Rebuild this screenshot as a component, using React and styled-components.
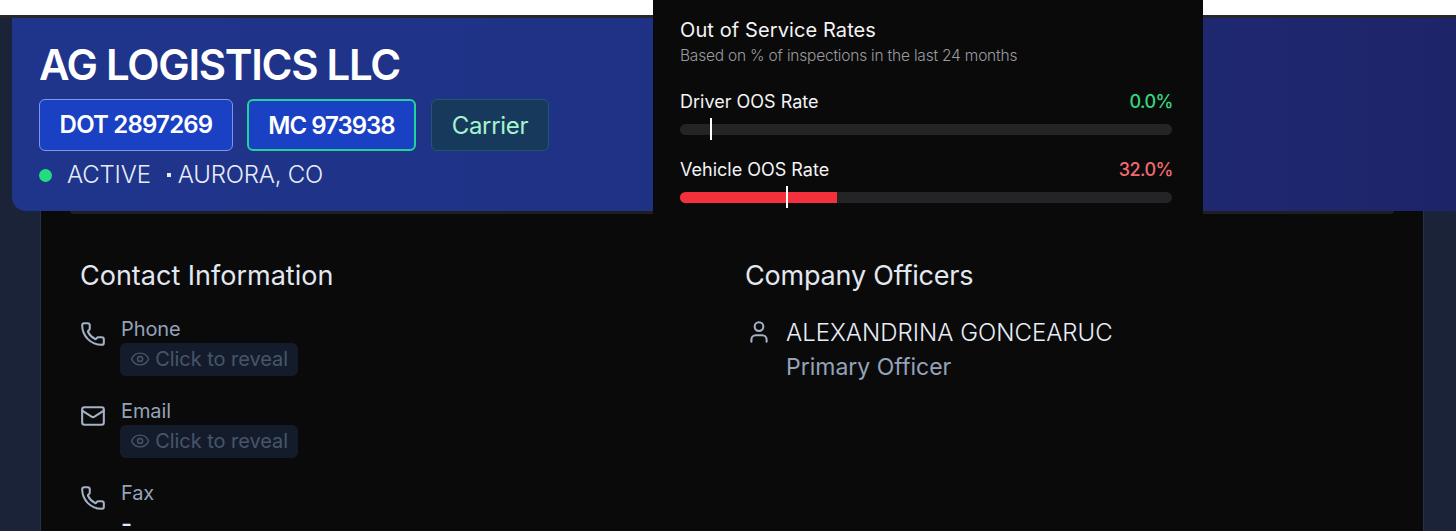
import React from "react";
import styled, { createGlobalStyle } from "styled-components";
import { Eye, Mail, Phone, User } from "lucide-react";

const GlobalStyle = createGlobalStyle`
  html, body {
    margin: 0;
    padding: 0;
    height: 531px;
    overflow: hidden;
    background: #1a2338;
    font-family: Inter, "Noto Sans", "Liberation Sans", sans-serif;
  }
`;

const Page = styled.div`
  position: relative;
  height: 531px;
  overflow: hidden;
`;

const TopStrip = styled.div`
  height: 15px;
  background: #ffffff;
  border-bottom: 3px solid #26272c;
`;

const Hero = styled.header`
  box-sizing: border-box;
  height: 193px;
  margin-left: 12px;
  padding: 27px 28px 0;
  border-radius: 0 0 0 14px;
  background: linear-gradient(90deg, #1f358c 0%, #1f3184 50%, #1e2468 100%);
`;

const Title = styled.h1`
  margin: 0 0 0 -1px;
  font-size: 42px;
  line-height: 40px;
  font-weight: 600;
  letter-spacing: -1.3px;
  color: #ffffff;
`;

const BadgeRow = styled.div`
  display: flex;
  margin-top: 14px;
  margin-left: -1px;
`;

const Badge = styled.span`
  box-sizing: border-box;
  display: flex;
  align-items: center;
  justify-content: center;
  width: ${(p) => p.$width}px;
  height: 52px;
  margin-right: ${(p) => p.$gap}px;
  padding-bottom: ${(p) => p.$lift || 0}px;
  border-radius: 6px;
  border: ${(p) => p.$border};
  background: ${(p) => p.$bg};
  color: ${(p) => p.$color};
  font-size: 24px;
  font-weight: ${(p) => p.$weight};
  letter-spacing: ${(p) => p.$spacing}px;
`;

const StatusRow = styled.div`
  display: flex;
  align-items: center;
  margin: 9px 0 0 -1px;
  font-size: 24px;
  line-height: 30px;
  font-weight: 300;
  letter-spacing: -0.2px;
  color: #e7edf8;
`;

const StatusDot = styled.span`
  width: 13px;
  height: 13px;
  border-radius: 50%;
  background: #22dd80;
  margin-right: 15px;
`;

const Separator = styled.span`
  width: 4px;
  height: 4px;
  margin: 0 7px 0 16px;
  background: #e7edf8;
`;

const MainCard = styled.main`
  box-sizing: border-box;
  height: 320px;
  margin: 0 32px 0 40px;
  background: #0a0a0b;
  border: solid #25324d;
  border-width: 0 1px;
`;

const HeroEdge = styled.div`
  height: 3px;
  margin: 0 29px;
  background: #1f1f23;
  border-radius: 0 0 10px 10px;
`;

const Columns = styled.div`
  display: grid;
  grid-template-columns: 665px 1fr;
  padding: 45px 0 0 39px;
`;

const Heading = styled.h2`
  margin: 0 0 24px;
  font-size: 27px;
  line-height: 34px;
  font-weight: 400;
  letter-spacing: ${(p) => p.$spacing}px;
  color: #e2e8f0;
`;

const ContactRow = styled.div`
  display: flex;
  gap: 15px;
  height: 82px;
  color: #a4b2c6;
`;

const IconSlot = styled.div`
  width: 26px;
  padding-top: 4px;
  flex: none;
`;

const Label = styled.div`
  font-size: 20px;
  line-height: 24px;
  font-weight: 400;
  letter-spacing: -0.1px;
  color: #94a3b8;
`;

const Reveal = styled.button`
  display: flex;
  align-items: center;
  gap: 5px;
  box-sizing: border-box;
  width: 178px;
  height: 33px;
  margin: 2px 0 0 -1px;
  padding: 0 10px 2px;
  border: 0;
  border-radius: 6px;
  background: #141c2c;
  color: #475569;
  font: 400 20px Inter, sans-serif;
  letter-spacing: -0.05px;
  white-space: nowrap;
`;

const Dash = styled.div`
  margin-top: 12px;
  font-size: 24px;
  line-height: 14px;
  font-weight: 500;
  color: #e2e8f0;
`;

const OfficerRow = styled.div`
  display: flex;
  gap: 14px;
`;

const OfficerIcon = styled.div`
  color: #a4b2c6;
  padding: 2px 0 0 1px;
  width: 26px;
  flex: none;
`;

const OfficerName = styled.div`
  font-size: 24px;
  line-height: 32px;
  font-weight: 300;
  color: #e8edf5;
`;

const OfficerRole = styled.div`
  margin-top: 2px;
  font-size: 23px;
  line-height: 32px;
  font-weight: 400;
  color: #94a3b8;
`;

const RatesPopover = styled.aside`
  position: absolute;
  top: 0;
  left: 653px;
  box-sizing: border-box;
  width: 550px;
  height: 215px;
  padding: 18px 31px 0 27px;
  background: #0a0a0b;
`;

const RatesTitle = styled.div`
  font-size: 20px;
  line-height: 24px;
  font-weight: 400;
  letter-spacing: 0.1px;
  color: #f4f4f5;
`;

const RatesNote = styled.div`
  margin: 3px 0 23px;
  font-size: 15.5px;
  line-height: 22px;
  font-weight: 300;
  letter-spacing: -0.2px;
  color: #9a9a9f;
`;

const RateBlock = styled.div`
  height: 68px;
`;

const RateHead = styled.div`
  display: flex;
  justify-content: space-between;
  font-size: 18px;
  line-height: 24px;
  font-weight: 400;
  color: #f4f4f5;
`;

const RateValue = styled.span`
  margin-right: -1px;
  font-weight: 500;
  letter-spacing: -0.5px;
  color: ${(p) => p.$color};
`;

const Track = styled.div`
  position: relative;
  height: 11px;
  margin-top: 10px;
  border-radius: 6px;
  background: #242426;
`;

const Fill = styled.div`
  height: 100%;
  border-radius: 6px 0 0 6px;
  background: #f5303d;
`;

const Marker = styled.div`
  position: absolute;
  top: -6px;
  width: 2px;
  height: 22px;
  background: #ffffff;
`;

function ContactItem({ icon: Icon, label, children }) {
  return (
    <ContactRow>
      <IconSlot>
        <Icon size={26} strokeWidth={1.9} />
      </IconSlot>
      <div>
        <Label>{label}</Label>
        {children}
      </div>
    </ContactRow>
  );
}

function RevealButton() {
  return (
    <Reveal>
      <Eye size={22} strokeWidth={1.7} />
      Click to reveal
    </Reveal>
  );
}

function Rate({ name, value, color, fill, marker }) {
  return (
    <RateBlock>
      <RateHead>
        {name}
        <RateValue $color={color}>{value}</RateValue>
      </RateHead>
      <Track>
        {fill > 0 && <Fill style={{ width: `${fill}%` }} />}
        <Marker style={{ left: `${marker}%` }} />
      </Track>
    </RateBlock>
  );
}

export default function App() {
  return (
    <Page>
      <GlobalStyle />
      <TopStrip />
      <Hero>
        <Title>AG LOGISTICS LLC</Title>
        <BadgeRow>
          <Badge $width={194} $gap={14} $lift={2} $spacing={-0.8} $border="1px solid #7d97e6" $bg="#1a40c4" $color="#ffffff" $weight={600}>
            DOT 2897269
          </Badge>
          <Badge $width={169} $gap={15} $spacing={-1} $border="2px solid #22d39a" $bg="#1a40c4" $color="#ffffff" $weight={600}>
            MC 973938
          </Badge>
          <Badge $width={118} $gap={0} $spacing={-0.3} $border="1px solid #1d5a6b" $bg="#173a5c" $color="#a7f3d0" $weight={400}>
            Carrier
          </Badge>
        </BadgeRow>
        <StatusRow>
          <StatusDot />
          ACTIVE
          <Separator />
          AURORA, CO
        </StatusRow>
      </Hero>
      <MainCard>
        <HeroEdge />
        <Columns>
          <section>
            <Heading $spacing={0}>Contact Information</Heading>
            <ContactItem icon={Phone} label="Phone">
              <RevealButton />
            </ContactItem>
            <ContactItem icon={Mail} label="Email">
              <RevealButton />
            </ContactItem>
            <ContactItem icon={Phone} label="Fax">
              <Dash>-</Dash>
            </ContactItem>
          </section>
          <section>
            <Heading $spacing={-0.2}>Company Officers</Heading>
            <OfficerRow>
              <OfficerIcon>
                <User size={26} strokeWidth={1.9} />
              </OfficerIcon>
              <div>
                <OfficerName>ALEXANDRINA GONCEARUC</OfficerName>
                <OfficerRole>Primary Officer</OfficerRole>
              </div>
            </OfficerRow>
          </section>
        </Columns>
      </MainCard>
      <RatesPopover>
        <RatesTitle>Out of Service Rates</RatesTitle>
        <RatesNote>Based on % of inspections in the last 24 months</RatesNote>
        <Rate name="Driver OOS Rate" value="0.0%" color="#34d77f" fill={0} marker={6.1} />
        <Rate name="Vehicle OOS Rate" value="32.0%" color="#f26a6e" fill={32} marker={21.6} />
      </RatesPopover>
    </Page>
  );
}
